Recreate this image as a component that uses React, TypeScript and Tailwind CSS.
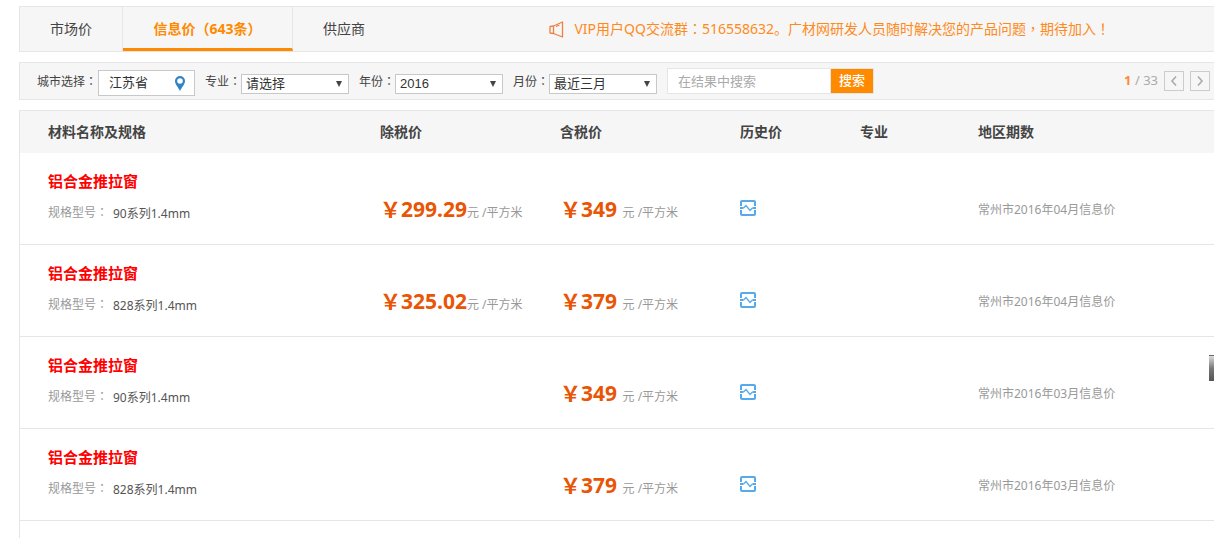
import { useState, type ReactNode } from "react";

type Row = {
  name: string;
  spec: string;
  netPrice?: string;
  taxPrice: string;
  period: string;
};

const ROWS: Row[] = [
  { name: "铝合金推拉窗", spec: "90系列1.4mm", netPrice: "299.29", taxPrice: "349", period: "常州市2016年04月信息价" },
  { name: "铝合金推拉窗", spec: "828系列1.4mm", netPrice: "325.02", taxPrice: "379", period: "常州市2016年04月信息价" },
  { name: "铝合金推拉窗", spec: "90系列1.4mm", taxPrice: "349", period: "常州市2016年03月信息价" },
  { name: "铝合金推拉窗", spec: "828系列1.4mm", taxPrice: "379", period: "常州市2016年03月信息价" },
];

const TABS = ["市场价", "信息价（643条）", "供应商"];

// Punctuation centred in its cell, which the SC face does not do
function Mark({ children }: { children: ReactNode }) {
  return <span className="font-['Noto_Sans_CJK_TC',sans-serif] leading-none">{children}</span>;
}

function HornIcon() {
  return (
    <svg width="15" height="17" viewBox="0 0 15 17" fill="none" stroke="#ee8044" strokeWidth="1.3" strokeLinejoin="round">
      <path d="M1 5.5 L4.5 5 L13.5 1 V16 L4.5 12.5 L1 12 Z" />
      <path d="M4.5 5 V12.5 M7 5.5 L10.5 4" />
    </svg>
  );
}

function PinIcon() {
  return (
    <svg width="10" height="15" viewBox="0 0 10 15">
      <path
        d="M5 0 A5 5 0 0 0 0 5 C0 8 3 11 5 15 C7 11 10 8 10 5 A5 5 0 0 0 5 0 Z M5 2.2 A2.8 2.8 0 1 1 5 7.8 A2.8 2.8 0 1 1 5 2.2 Z"
        fill="#2f83c8"
        fillRule="evenodd"
      />
    </svg>
  );
}

function HistoryIcon() {
  return (
    <svg width="16" height="16" viewBox="0 0 16 16" fill="none" stroke="#55a9ee">
      <path d="M1 6 V2 Q1 1 2 1 H14 Q15 1 15 2 V6" strokeWidth="2" />
      <path d="M1 10 V14 Q1 15 2 15 H14 Q15 15 15 14 V10" strokeWidth="2" />
      <path d="M0 8 H3.5 M12.5 8 H16" strokeWidth="1.8" />
      <path d="M3.5 8 L6 5.5 L10 10.5 L12.5 8" strokeWidth="1.3" />
    </svg>
  );
}

function Chevron({ d }: { d: string }) {
  return (
    <svg width="8" height="12" viewBox="0 0 8 12" fill="none" stroke="#aaa" strokeWidth="1.6">
      <path d={d} />
    </svg>
  );
}

function FilterSelect({ id, label, options }: { id: string; label: string; options: string[] }) {
  return (
    <div className="flex shrink-0 items-center">
      <label htmlFor={id} className="mt-0.5 w-9 whitespace-nowrap text-xs">
        {label}
        <Mark>：</Mark>
      </label>
      <div className="relative mt-1.5">
        <select
          id={id}
          className="block h-5 w-[108px] appearance-none border border-[#c8c8c8] bg-white pl-1 font-['Liberation_Sans','Noto_Sans_CJK_SC',sans-serif] text-[13px] leading-[18px] text-[#333]"
        >
          {options.map((o) => (
            <option key={o}>{o}</option>
          ))}
        </select>
        <svg className="pointer-events-none absolute right-[7px] top-[7px]" width="6" height="6" viewBox="0 0 6 6">
          <path d="M0 0 H6 L3 6 Z" fill="#444" />
        </svg>
      </div>
    </div>
  );
}

function Price({ value, spaced }: { value: string; spaced?: boolean }) {
  return (
    <div className="whitespace-nowrap text-xs leading-7 text-[#999]">
      <b className="text-[21px] text-[#e95504]">
        ￥{value}
        {spaced && " "}
      </b>
      元 /平方米
    </div>
  );
}

export default function App() {
  const [tab, setTab] = useState(1);
  const [page, setPage] = useState(1);
  const total = 33;

  return (
    <div className="flex min-h-screen flex-col overflow-hidden bg-white pl-[19px] pt-1.5 font-['Noto_Sans','Noto_Sans_CJK_SC',sans-serif] text-[#444]">
      <header className="flex h-[46px] shrink-0 border-y border-l border-[#e6e6e6] bg-[#f6f6f6] text-sm">
        <nav className="flex shrink-0">
          {TABS.map((t, i) => (
            <button
              key={t}
              type="button"
              onClick={() => setTab(i)}
              className={
                (i === tab ? "min-w-[170px] border-b-[3px] border-b-[#ff8a00] pt-[3px] font-bold text-[#ff8a00] " : "") +
                (i < TABS.length - 1 ? "border-r border-r-[#e6e6e6] " : "") +
                "whitespace-nowrap px-[30px]"
              }
            >
              {t}
            </button>
          ))}
        </nav>
        <p className="ml-auto mr-[104px] flex items-center gap-2.5 whitespace-nowrap text-[#ff8a1c]">
          <HornIcon />
          <span>
            VIP用户QQ交流群<Mark>：</Mark>516558632。广材网研发人员随时解决您的产品问题<Mark>，</Mark>期待加入<Mark>！</Mark>
          </span>
        </p>
      </header>

      <form
        onSubmit={(e) => e.preventDefault()}
        className="mt-2.5 flex h-[38px] shrink-0 items-center gap-2.5 border-y border-l border-[#e6e6e6] bg-[#f6f6f6] pl-[17px] pr-1"
      >
        <div className="flex shrink-0 items-center">
          <label htmlFor="city" className="mt-0.5 w-[61px] whitespace-nowrap text-xs">
            城市选择<Mark>：</Mark>
          </label>
          <button
            id="city"
            type="button"
            className="mt-1 flex h-[26px] w-[97px] items-center justify-between border border-[#c8c8c8] bg-white pl-2.5 pr-[9px] text-[13px] text-[#333]"
          >
            江苏省
            <PinIcon />
          </button>
        </div>
        <FilterSelect id="major" label="专业" options={["请选择"]} />
        <FilterSelect id="year" label="年份" options={["2016", "2015"]} />
        <FilterSelect id="month" label="月份" options={["最近三月", "最近六月"]} />
        <div className="flex shrink-0">
          <input
            type="text"
            aria-label="在结果中搜索"
            placeholder="在结果中搜索"
            className="h-[26px] w-[164px] border border-[#e6e6e6] bg-white px-2.5 text-[13px] placeholder:text-[#aaa]"
          />
          <button type="submit" className="h-[26px] w-[43px] border border-l-0 border-[#e6e6e6] bg-[#ff8a00] text-[13px] font-medium text-white">
            搜索
          </button>
        </div>
        <div className="ml-auto flex shrink-0 items-center gap-1.5 text-[13px] text-[#aaa]">
          <span>
            <b className="text-[#ff8a3c]">{page}</b> / {total}
          </span>
          <button
            type="button"
            aria-label="上一页"
            onClick={() => setPage(Math.max(1, page - 1))}
            className="flex h-5 w-5 items-center justify-center border border-[#ccc]"
          >
            <Chevron d="M6 1.5 L2 6 L6 10.5" />
          </button>
          <button
            type="button"
            aria-label="下一页"
            onClick={() => setPage(Math.min(total, page + 1))}
            className="flex h-5 w-5 items-center justify-center border border-[#ccc]"
          >
            <Chevron d="M2 1.5 L6 6 L2 10.5" />
          </button>
        </div>
      </form>

      <main className="mt-2.5 flex-1 border-l border-t border-[#e6e6e6]">
        <table className="w-full table-fixed border-separate border-spacing-0 text-left">
          <colgroup>
            <col className="w-[360px]" />
            <col className="w-[180px]" />
            <col className="w-[180px]" />
            <col className="w-[120px]" />
            <col className="w-[118px]" />
            <col />
          </colgroup>
          <thead className="bg-[#f6f6f6] text-sm">
            <tr className="h-[42px]">
              <th className="pl-7">材料名称及规格</th>
              <th>除税价</th>
              <th>含税价</th>
              <th>历史价</th>
              <th>专业</th>
              <th>地区期数</th>
            </tr>
          </thead>
          <tbody>
            {ROWS.map((r, i) => (
              <tr key={i} className="h-[92px] [&>td]:border-b [&>td]:border-[#e6e6e6]">
                <td className="pb-1 pl-7">
                  <a href="#" className="block text-[15px] font-bold leading-6 text-[#f00]">
                    {r.name}
                  </a>
                  <div className="mt-2.5 flex text-xs leading-5">
                    <span className="w-[65px] text-[#999]">
                      规格型号<Mark>：</Mark>
                    </span>
                    <span className="pt-px text-[#555]">{r.spec}</span>
                  </div>
                </td>
                <td className="pt-6">{r.netPrice && <Price value={r.netPrice} />}</td>
                <td className="pt-6">
                  <Price value={r.taxPrice} spaced />
                </td>
                <td className="pt-[18px]">
                  <button type="button" aria-label="历史价" className="block">
                    <HistoryIcon />
                  </button>
                </td>
                <td />
                <td className="pt-[22px] text-xs text-[#999]">{r.period}</td>
              </tr>
            ))}
          </tbody>
        </table>
      </main>

      {/* collapsed side panel handle */}
      <div className="absolute right-0 top-[355px] h-[26px] w-[5px] border-t border-[#666] bg-linear-to-b from-[#ddd] via-[#777] to-[#555]" />
    </div>
  );
}
